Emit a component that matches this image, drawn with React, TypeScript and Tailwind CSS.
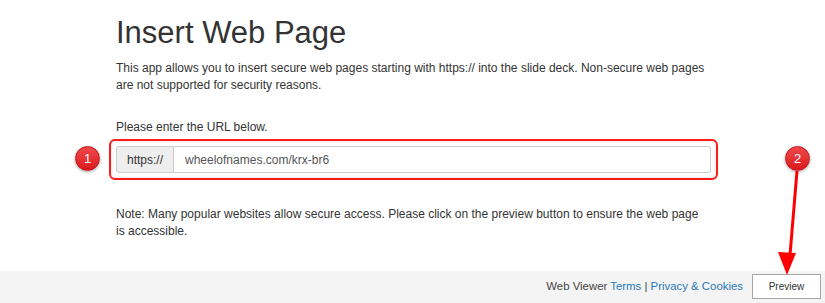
import React from "react";

function Badge({ n, className }: { n: string; className: string }) {
    return (
        <div
            className={`absolute flex h-[25px] w-[25px] items-center justify-center rounded-full border border-[#c0161c] bg-gradient-to-b from-[#f0464a] to-[#d9161c] text-[13px] text-white shadow-[0_1px_3px_rgba(0,0,0,0.35)] ${className}`}
        >
            {n}
        </div>
    );
}

export default function App() {
    return (
        <div
            className="relative flex h-[303px] w-[825px] flex-col overflow-hidden bg-white text-[#333]"
            style={{ fontFamily: '"Liberation Sans", Arial, sans-serif' }}
        >
            <div className="flex-1 pl-[116px]">
                <div className="w-[594px]">
                    <h1 className="mt-[16px] text-[31px] leading-[34px] font-normal text-[#333]">
                        Insert Web Page
                    </h1>
                    <p className="mt-[10px] text-[12px] leading-[17px]">
                        This app allows you to insert secure web pages starting with https:// into
                        the slide deck. Non-secure web pages are not supported for security reasons.
                    </p>
                    <p className="mt-[25px] text-[12px] leading-[17px]">Please enter the URL below.</p>
                    <div className="-ml-[7px] -mr-[8px] mt-[3px] rounded-[6px] border-2 border-[#ff1a1a] p-[5px] shadow-[inset_0_0_4px_rgba(0,0,0,0.12)]">
                        <div className="flex h-[27px] text-[12px]">
                            <div className="flex w-[58px] items-center justify-center rounded-l-[3px] border border-[#ccc] bg-[#eee] text-[#333]">
                                https://
                            </div>
                            <div className="flex flex-1 items-center rounded-r-[3px] border border-l-0 border-[#ccc] bg-white pl-[11px] text-[#555]">
                                wheelofnames.com/krx-br6
                            </div>
                        </div>
                    </div>
                    <p className="mt-[26px] text-[12px] leading-[17px]">
                        Note: Many popular websites allow secure access. Please click on the preview
                        button to ensure the web page is accessible.
                    </p>
                </div>
            </div>
            <div className="flex h-[32px] items-start justify-end bg-[#f4f4f4] pr-[4px] pt-[3px]">
                <div className="mr-[9px] mt-[5px] text-[11.4px] leading-[15px] text-[#444]">
                    Web Viewer <span className="text-[#2a78b8]">Terms</span> |{" "}
                    <span className="text-[#2a78b8]">Privacy &amp; Cookies</span>
                </div>
                <button className="h-[25px] w-[69px] border border-[#a6a6a6] bg-white text-[10px] text-[#333]">
                    Preview
                </button>
            </div>

            <Badge n="1" className="left-[75px] top-[146px]" />
            <Badge n="2" className="left-[785px] top-[146px]" />
            <svg className="absolute left-0 top-0" width="825" height="303" viewBox="0 0 825 303">
                <line x1="797" y1="171" x2="790" y2="255" stroke="#ff0000" strokeWidth="3" />
                <polygon points="778,252 796,253 787,275" fill="#ff0000" />
            </svg>
        </div>
    );
}
